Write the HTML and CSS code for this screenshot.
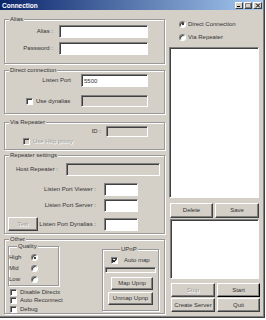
FILE: index.html
```html
<!DOCTYPE html>
<html lang="en">
  <head>
    <meta charset="UTF-8" />
    <meta name="viewport" content="width=device-width, initial-scale=1.0" />
    <title>Connection</title>
    <link rel="stylesheet" href="styles.css">
  </head>
  <body>
    <div class="window">
      <div class="titlebar">
        <span class="title">Connection</span>
        <div class="title-buttons">
          <span class="tbtn">
            <svg width="6" height="5" viewBox="0 0 6 5"><rect x="1" y="3" width="3" height="1" fill="#000" /></svg>
          </span>
          <span class="tbtn">
            <svg width="6" height="5" viewBox="0 0 6 5"><rect x="0.5" y="0.5" width="5" height="4" fill="none" stroke="#808080" /></svg>
          </span>
          <span class="tbtn tbtn-close">
            <svg width="6" height="5" viewBox="0 0 6 5"><path d="M1 0.5 L5 4.5 M5 0.5 L1 4.5" stroke="#000" /></svg>
          </span>
        </div>
      </div>

      <div class="content">
        <!-- левая колонка -->
        <div class="col-left">
          <fieldset class="group group-alias">
            <legend>Alias</legend>
            <div class="form-row">
              <label class="lbl lbl-alias">Alias :</label>
              <input class="field field-alias" type="text" />
            </div>
            <div class="form-row form-row-gap4">
              <label class="lbl lbl-alias">Password :</label>
              <input class="field field-alias" type="password" />
            </div>
          </fieldset>

          <fieldset class="group group-direct">
            <legend>Direct connection</legend>
            <div class="form-row">
              <label class="lbl lbl-port">Listen Port</label>
              <input class="field field-port" type="text" value="5500" />
            </div>
            <div class="form-row form-row-dyn">
              <div class="check-area">
                <span class="check check-dyn"></span>
                <span class="check-text">Use dynalias</span>
              </div>
              <input class="field field-dyn" type="text" disabled />
            </div>
          </fieldset>

          <fieldset class="group group-via">
            <legend>Via Repeater</legend>
            <div class="form-row">
              <label class="lbl lbl-id">ID :</label>
              <input class="field field-id" type="text" disabled />
            </div>
            <div class="form-row form-row-proxy">
              <span class="check check-off check-proxy"></span>
              <span class="check-text text-disabled">Use Http proxy</span>
            </div>
          </fieldset>

          <fieldset class="group group-repeater">
            <legend>Repeater settings</legend>
            <div class="form-row form-row-host">
              <label class="lbl lbl-host">Host Repeater :</label>
              <input class="field field-host" type="text" disabled />
            </div>
            <div class="form-row port-row port-row-viewer">
              <label class="lbl lbl-grow">Listen Port Viewer :</label>
              <input class="field field-small" type="text" />
            </div>
            <div class="form-row port-row port-row-server">
              <label class="lbl lbl-grow">Listen Port Server :</label>
              <input class="field field-small" type="text" />
            </div>
            <div class="form-row port-row port-row-dyn">
              <button class="btn btn-test" disabled>Test</button>
              <label class="lbl lbl-grow">Listen Port Dynalias :</label>
              <input class="field field-small" type="text" />
            </div>
          </fieldset>

          <fieldset class="group group-other">
            <legend>Other</legend>
            <div class="other-inner">
              <div class="other-left">
                <fieldset class="group group-quality">
                  <legend>Quality</legend>
                  <div class="q-row">
                    <span class="q-label">High</span>
                    <span class="radio radio-on"></span>
                  </div>
                  <div class="q-row">
                    <span class="q-label">Mid</span>
                    <span class="radio"></span>
                  </div>
                  <div class="q-row">
                    <span class="q-label">Low</span>
                    <span class="radio"></span>
                  </div>
                </fieldset>
                <div class="checks">
                  <div class="check-row">
                    <span class="check"></span>
                    <span class="check-text">Disable Directx</span>
                  </div>
                  <div class="check-row">
                    <span class="check"></span>
                    <span class="check-text">Auto Reconnect</span>
                  </div>
                  <div class="check-row">
                    <span class="check"></span>
                    <span class="check-text">Debug</span>
                  </div>
                </div>
              </div>

              <fieldset class="group group-upnp">
                <legend>UPnP</legend>
                <div class="check-row upnp-check">
                  <span class="check">
                    <svg width="5" height="5" viewBox="0 0 5 5"><path d="M0.5 2 L2 3.6 L4.6 0.8" fill="none" stroke="#000" stroke-width="1.2" /></svg>
                  </span>
                  <span class="check-text upnp-text">Auto map</span>
                </div>
                <div class="field upnp-bar"></div>
                <button class="btn btn-map">Map Upnp</button>
                <button class="btn btn-unmap">Unmap Upnp</button>
              </fieldset>
            </div>
          </fieldset>
        </div>

        <!-- правая колонка -->
        <div class="col-right">
          <div class="radio-row">
            <span class="radio radio-on"></span>
            <span class="radio-text">Direct Connection</span>
          </div>
          <div class="radio-row radio-row-second">
            <span class="radio"></span>
            <span class="radio-text">Via Repeater</span>
          </div>
          <div class="field listbox listbox-main"></div>
          <div class="btn-row btn-row-list">
            <button class="btn btn-w43">Delete</button>
            <button class="btn btn-w44">Save</button>
          </div>
          <div class="field listbox listbox-log"></div>
          <div class="btn-row btn-row-action">
            <button class="btn btn-w44" disabled>Stop</button>
            <button class="btn btn-w43 btn-default">Start</button>
          </div>
          <div class="btn-row btn-row-last">
            <button class="btn btn-w44">Create Server</button>
            <button class="btn btn-w43">Quit</button>
          </div>
        </div>
      </div>
    </div>
  </body>
</html>
```

FILE: styles.css
```css
/* Общие стили */
* {
  margin: 0;
  padding: 0;
  box-sizing: border-box;
}

body {
  background-color: #ffffff;
  font-family: "Liberation Sans", Arial, sans-serif;
  font-size: 6px;
  line-height: 7px;
  color: #333;
}

/* Окно */
.window {
  width: 265px;
  height: 318px;
  background-color: #d4d0c8;
  border-right: 1px solid #404040;
  border-bottom: 1px solid #404040;
  box-shadow: inset -1px -1px 0 #808080;
  display: flex;
  flex-direction: column;
}

.titlebar {
  height: 10px;
  margin-right: 1px;
  padding: 0 1px 0 2px;
  background: linear-gradient(90deg, #0a246a, #a6caf0);
  display: flex;
  align-items: center;
  justify-content: space-between;
}

.title {
  color: #fff;
  font-weight: bold;
  font-size: 6.5px;
}

.title-buttons {
  display: flex;
  gap: 1px;
}

.tbtn {
  width: 8px;
  height: 7px;
  background-color: #d4d0c8;
  border: 1px solid;
  border-color: #fff #404040 #404040 #fff;
  display: flex;
  align-items: center;
  justify-content: center;
}

.tbtn-close {
  width: 9px;
}

.content {
  display: flex;
  gap: 3px;
  padding-left: 4px;
}

.col-left {
  width: 162px;
  padding-top: 6px;
  display: flex;
  flex-direction: column;
}

.col-right {
  width: 91px;
  padding-top: 10px;
  display: flex;
  flex-direction: column;
}

/* Группы */
.group {
  width: 161px;
  border: 1px solid #999;
  box-shadow: 1px 1px 0 #fff, inset 1px 1px 0 #fff;
  min-width: 0;
}

.group legend {
  margin-left: 4px;
  padding: 0 1px;
  background-color: #d4d0c8;
  line-height: 7px;
}

.group-alias {
  height: 48px;
  padding-top: 2px;
}

.group-direct {
  height: 47px;
  margin-top: 3px;
}

.group-via {
  height: 31px;
  margin-top: 5px;
}

.group-repeater {
  height: 82px;
  margin-top: 2px;
}

.group-other {
  height: 78px;
  margin-top: 2px;
}

/* Строки формы */
.form-row {
  display: flex;
  align-items: center;
}

.form-row-gap4 {
  margin-top: 4px;
}

.lbl {
  flex-shrink: 0;
  text-align: right;
  white-space: nowrap;
}

.field {
  background-color: #fff;
  border: 1px solid;
  border-color: #808080 #fff #fff #808080;
  box-shadow: inset 1px 1px 0 #404040;
  font: inherit;
  color: #333;
  padding: 0 2px;
  outline: none;
}

.field:disabled {
  background-color: #d4d0c8;
}

.lbl-alias {
  width: 48px;
}

.field-alias {
  margin-left: 6px;
  width: 89px;
  height: 13px;
}

.lbl-port {
  width: 66px;
}

.field-port {
  margin-left: 10px;
  width: 67px;
  height: 13px;
}

.form-row-dyn {
  margin-top: 8px;
}

.check-area {
  width: 76px;
  display: flex;
  align-items: center;
}

.check-dyn {
  margin-left: 21px;
}

.field-dyn {
  width: 67px;
  height: 12px;
}

.lbl-id {
  width: 96px;
}

.field-id {
  margin-left: 5px;
  width: 42px;
  height: 11px;
}

.form-row-proxy {
  margin-top: 1px;
  height: 7px;
}

.check-proxy {
  margin-left: 18px;
}

.form-row-host {
  margin-top: 4px;
}

.lbl-host {
  width: 53px;
}

.field-host {
  margin-left: 8px;
  width: 94px;
  height: 13px;
}

.port-row {
  width: 133px;
}

.port-row-viewer {
  margin-top: 7px;
}

.port-row-server {
  margin-top: 3px;
}

.port-row-dyn {
  margin-top: 5px;
}

.lbl-grow {
  flex: 1;
}

.field-small {
  margin-left: 8px;
  width: 34px;
  height: 13px;
}

/* Кнопки */
.btn {
  background-color: #d4d0c8;
  border: 1px solid;
  border-color: #fff #404040 #404040 #fff;
  box-shadow: inset -1px -1px 0 #808080;
  font: inherit;
  color: #333;
  display: flex;
  align-items: center;
  justify-content: center;
  white-space: nowrap;
}

.btn:disabled {
  color: #a0a0a0;
  text-shadow: 1px 1px 0 #fff;
}

.btn-default {
  border-color: #fff #000 #000 #fff;
}

.btn-test {
  margin-left: 3px;
  width: 30px;
  height: 14px;
  flex-shrink: 0;
}

/* Переключатели и флажки */
.radio {
  width: 7px;
  height: 7px;
  border-radius: 50%;
  background-color: #fff;
  border: 1px solid;
  border-color: #808080 #fff #fff #808080;
  box-shadow: inset 1px 1px 0 #404040;
  display: flex;
  align-items: center;
  justify-content: center;
  flex-shrink: 0;
}

.radio-on::after {
  content: "";
  width: 2px;
  height: 2px;
  border-radius: 50%;
  background-color: #000;
}

.check {
  width: 7px;
  height: 7px;
  background-color: #fff;
  border: 1px solid;
  border-color: #808080 #fff #fff #808080;
  box-shadow: inset 1px 1px 0 #404040;
  display: flex;
  align-items: center;
  justify-content: center;
  flex-shrink: 0;
}

.check-off {
  background-color: #d4d0c8;
}

.check-text {
  margin-left: 3px;
  white-space: nowrap;
}

.text-disabled {
  color: #a0a0a0;
  text-shadow: 1px 1px 0 #fff;
}

/* Группа Other */
.other-inner {
  display: flex;
}

.other-left {
  margin-left: 3px;
  width: 51px;
}

.group-quality {
  width: 51px;
  height: 43px;
  padding-top: 2px;
}

.group-quality legend {
  margin-left: 8px;
}

.q-row {
  height: 11px;
  display: flex;
  align-items: center;
}

.q-label {
  width: 22px;
}

.checks {
  margin-top: 2px;
}

.check-row {
  height: 8.5px;
  display: flex;
  align-items: center;
}

.checks .check {
  margin-left: 2px;
}

.group-upnp {
  margin-left: 43px;
  margin-top: 3px;
  width: 57px;
  height: 65px;
  display: flex;
  flex-direction: column;
}

.group-upnp legend {
  margin-left: 17px;
}

.upnp-check {
  margin-top: 3px;
  height: 8px;
}

.upnp-check .check {
  margin-left: 8px;
}

.upnp-text {
  margin-left: 6px;
}

.upnp-bar {
  margin: 3px 0 0 2px;
  width: 51px;
  height: 6px;
  background-color: #d4d0c8;
}

.btn-map {
  margin: 4px 5px 0 auto;
  width: 42px;
  height: 13px;
}

.btn-unmap {
  margin: 2px 5px 0 auto;
  width: 45px;
  height: 13px;
}

/* Правая колонка */
.radio-row {
  height: 8px;
  display: flex;
  align-items: center;
}

.radio-row .radio {
  margin-left: 10px;
}

.radio-text {
  margin-left: 2px;
  white-space: nowrap;
}

.radio-row-second {
  margin-top: 5px;
}

.listbox {
  padding: 0;
}

.listbox-main {
  margin-top: 6px;
  width: 90px;
  height: 151px;
}

.listbox-log {
  margin: 1px 0 0 1px;
  width: 89px;
  height: 60px;
}

.btn-row {
  display: flex;
}

.btn-row-list {
  margin: 5px 0 0 1px;
  gap: 2px;
  height: 15px;
}

.btn-row-action {
  margin: 4px 0 0 2px;
  gap: 2px;
  height: 14px;
}

.btn-row-last {
  margin: 1px 0 0 2px;
  gap: 2px;
  height: 14px;
}

.btn-w43 {
  width: 43px;
}

.btn-w44 {
  width: 44px;
}
```
